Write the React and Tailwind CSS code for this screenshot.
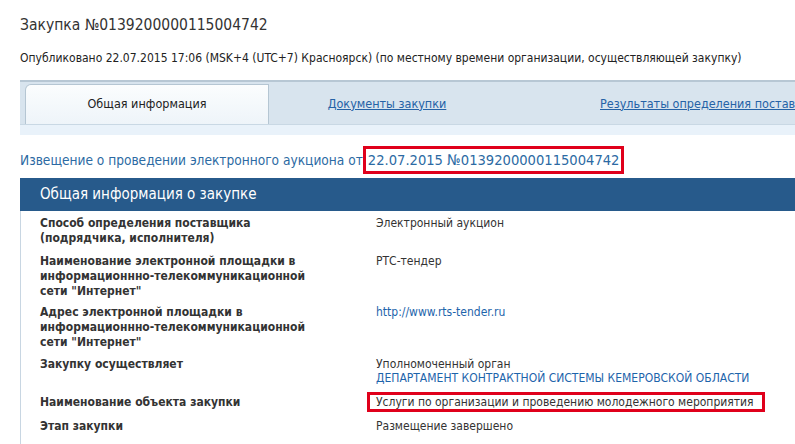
import React from 'react';

const rows = [
  {
    label: ['Способ определения поставщика', '(подрядчика, исполнителя)'],
    value: <span>Электронный аукцион</span>,
    pad: 'pb-[8px]',
  },
  {
    label: ['Наименование электронной площадки в', 'информационнно-телекоммуникационной', 'сети "Интернет"'],
    value: <span>РТС-тендер</span>,
    pad: 'pb-[6px]',
  },
  {
    label: ['Адрес электронной площадки в', 'информационнно-телекоммуникационной', 'сети "Интернет"'],
    value: <a className="text-[#1d64ab]">http://www.rts-tender.ru</a>,
    pad: 'pb-[7px]',
  },
  {
    label: ['Закупку осуществляет'],
    value: (
      <div className="leading-[14px]">
        <div>Уполномоченный орган</div>
        <a className="text-[#1d64ab]">ДЕПАРТАМЕНТ КОНТРАКТНОЙ СИСТЕМЫ КЕМЕРОВСКОЙ ОБЛАСТИ</a>
      </div>
    ),
    pad: 'pb-[10px]',
  },
  {
    label: ['Наименование объекта закупки'],
    value: (
      <span className="-ml-[9px] -my-[3px] inline-block w-[398px] border-[3px] border-[#e0001b] pl-[6px] leading-[14px]">
        Услуги по организации и проведению молодежного мероприятия
      </span>
    ),
    pad: 'pb-[9px]',
  },
  {
    label: ['Этап закупки'],
    value: <span>Размещение завершено</span>,
    pad: 'pb-[10px]',
  },
];

export default function App() {
  return (
    <div
      className="h-[444px] w-full overflow-hidden bg-white text-[#333]"
      style={{ fontFamily: '"DejaVu Sans Condensed", "DejaVu Sans", sans-serif' }}
    >
      <div className="pl-[20px]">
        <h1 className="pt-[14px] text-[15.5px] leading-[22px] text-[#333]">Закупка №0139200000115004742</h1>
        <p className="mt-[14px] text-[12px] leading-[16px] text-[#222]">
          Опубликовано 22.07.2015 17:06 (MSK+4 (UTC+7) Красноярск) (по местному времени организации, осуществляющей закупку)
        </p>

        <div className="mt-[14px] border-t-[2px] border-[#b7c7d4] bg-[#d8e4ee]">
          <div className="flex h-[42px] items-end overflow-hidden whitespace-nowrap text-[12.5px]">
            <div className="ml-[5px] flex h-[40px] w-[244px] shrink-0 items-center justify-center rounded-tl-[6px] border border-b-0 border-[#b5c6d3] bg-gradient-to-b from-[#fbfdfe] to-[#eef4f9] text-[#222]">
              Общая информация
            </div>
            <div className="flex h-[40px] w-[236px] shrink-0 items-center justify-center">
              <a className="text-[#2562a6] underline">Документы закупки</a>
            </div>
            <div className="flex h-[40px] shrink-0 items-center pl-[95px]">
              <a className="text-[#2562a6] underline">Результаты определения поставщика</a>
            </div>
          </div>
          <div className="h-[11px] border-t border-[#c9d8e4] bg-[#e9f2fa]"></div>
        </div>

        <h2 className="mt-[11px] whitespace-nowrap text-[13.6px] leading-[20px] text-[#2c6aa3]">
          Извещение о проведении электронного аукциона от
          <span className="inline-block border-[3px] border-[#e0001b] px-[2px] py-[1px] text-[14.6px]">
            22.07.2015 №0139200000115004742
          </span>
        </h2>

        <div className="mt-[4px] flex h-[33px] items-center bg-[#275a8b] pl-[20px] text-[15px] text-white">
          Общая информация о закупке
        </div>

        <div className="border-l border-[#c8d6e2] pt-[5px]">
          {rows.map((row, i) => (
            <div key={i} className={`grid grid-cols-[355px_1fr] ${row.pad}`}>
              <div className="pl-[19px] text-[12px] font-bold leading-[15px] text-[#333]">
                {row.label.map((l, j) => (
                  <div key={j}>{l}</div>
                ))}
              </div>
              <div className="text-[12px] leading-[15px] text-[#333]">{row.value}</div>
            </div>
          ))}
        </div>
      </div>
    </div>
  );
}
